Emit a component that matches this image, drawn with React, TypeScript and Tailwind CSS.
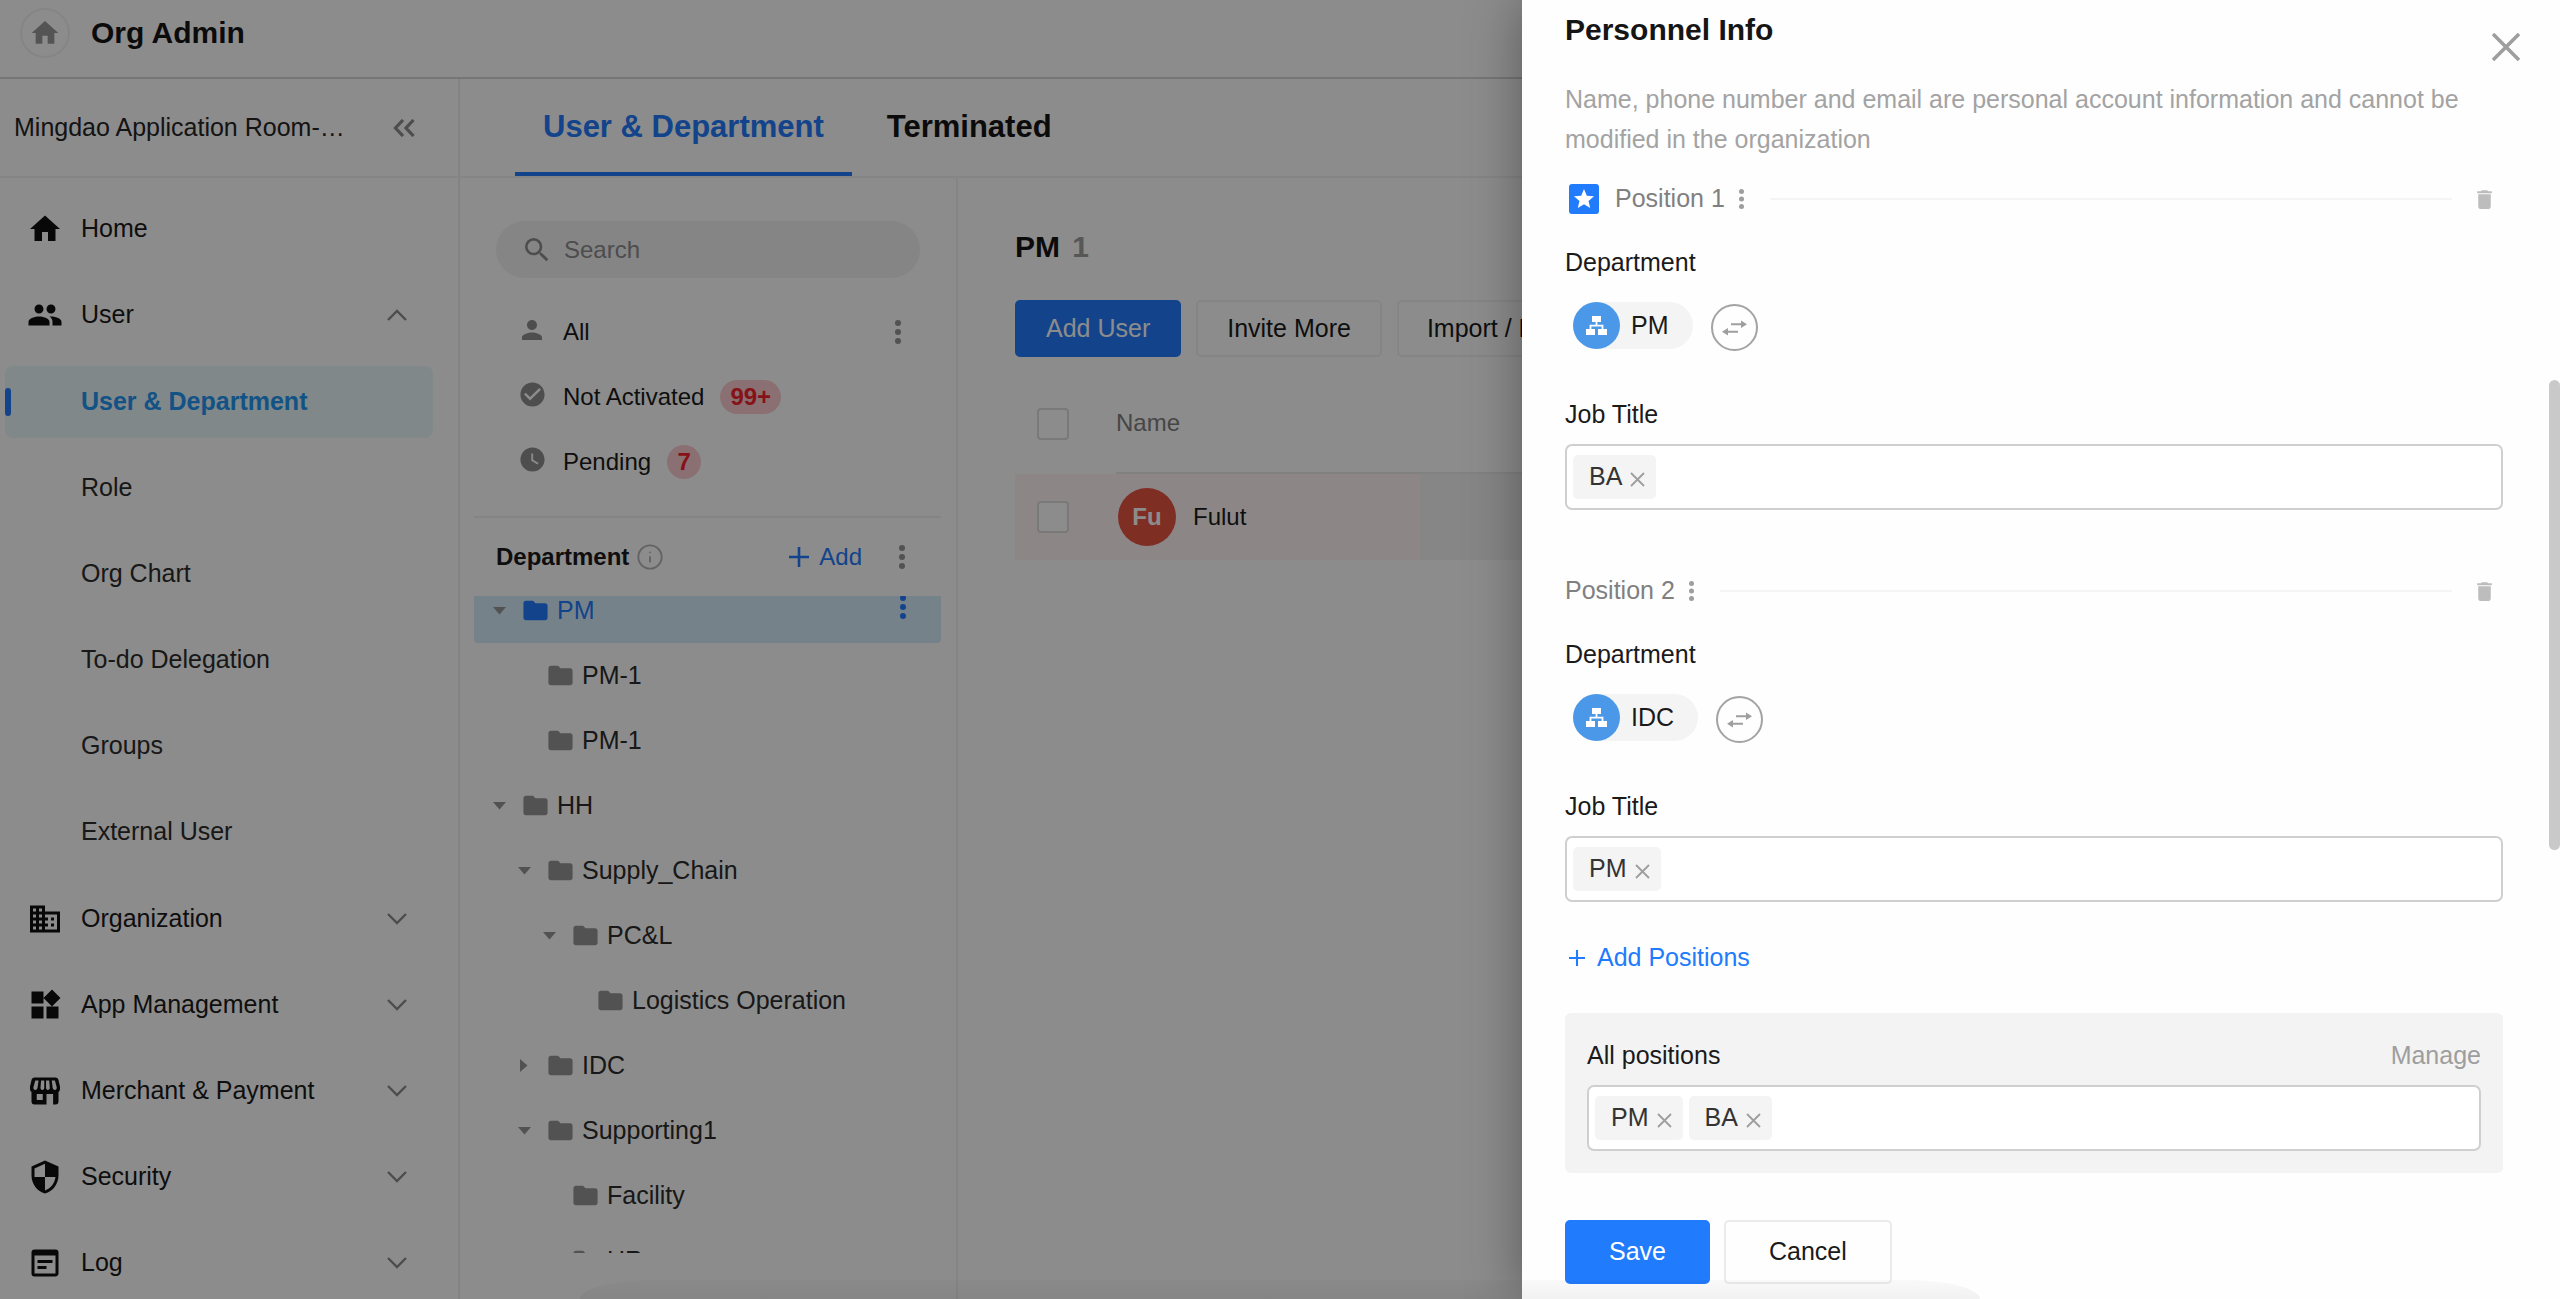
import { clsx } from 'clsx'
import { Info } from 'lucide-react'
import type { ReactNode } from 'react'
import {
  MdCheckCircle,
  MdDelete,
  MdDomain,
  MdFolder,
  MdHome,
  MdPeople,
  MdPerson,
  MdSearch,
  MdSecurity,
  MdStar,
  MdWatchLater,
  MdWidgets,
  MdWysiwyg,
} from 'react-icons/md'

const userPages = [
  'User & Department',
  'Role',
  'Org Chart',
  'To-do Delegation',
  'Groups',
  'External User',
]

const sections = [
  { label: 'Organization', icon: <MdDomain size={36} /> },
  { label: 'App Management', icon: <MdWidgets size={36} /> },
  { label: 'Merchant & Payment', icon: <StoreIcon /> },
  { label: 'Security', icon: <MdSecurity size={36} /> },
  { label: 'Log', icon: <MdWysiwyg size={36} /> },
]

type TreeNode = {
  id: number
  name: string
  level: number
  state?: 'open' | 'closed'
  selected?: boolean
}

const departments: TreeNode[] = [
  { id: 1, name: 'PM', level: 0, state: 'open', selected: true },
  { id: 2, name: 'PM-1', level: 1 },
  { id: 3, name: 'PM-1', level: 1 },
  { id: 4, name: 'HH', level: 0, state: 'open' },
  { id: 5, name: 'Supply_Chain', level: 1, state: 'open' },
  { id: 6, name: 'PC&L', level: 2, state: 'open' },
  { id: 7, name: 'Logistics Operation', level: 3 },
  { id: 8, name: 'IDC', level: 1, state: 'closed' },
  { id: 9, name: 'Supporting1', level: 1, state: 'open' },
  { id: 10, name: 'Facility', level: 2 },
  { id: 11, name: 'HR', level: 2 },
]

function StoreIcon() {
  return (
    <svg width="36" height="36" viewBox="0 0 24 24" fill="none">
      <path
        d="M5 3h14a2 2 0 0 1 1.900 1.400L22 9v1.500c0 1-.4 1.700-1 2.200V19a2 2 0 0 1-2 2h-1.600v-7H13v7H5a2 2 0 0 1-2-2v-6.300c-.6-.5-1-1.200-1-2.200V9l1.100-4.600A2 2 0 0 1 5 3z"
        fill="currentColor"
      />
      <path
        d="M5.500 5 4.300 9.500c-.2 1 .4 1.800 1.200 1.800s1.400-.6 1.500-1.400L7.700 5zM9.400 5 9 9.800c0 .9.600 1.500 1.300 1.500s1.200-.6 1.200-1.400V5zM12.700 5v4.900c0 .8.500 1.400 1.200 1.400s1.300-.6 1.300-1.500L14.800 5zM16.500 5l.6 4.900c.1.800.7 1.400 1.500 1.400s1.400-.8 1.200-1.800L18.600 5zM6.500 14h4v4h-4z"
        fill="#fff"
      />
    </svg>
  )
}

function Chevron({ up }: { up?: boolean }) {
  return (
    <svg width="20" height="12" viewBox="0 0 20 12" fill="none">
      <path
        d={up ? 'M1 11 10 2l9 9' : 'M1 1l9 9 9-9'}
        stroke="#8c8c8c"
        strokeWidth="2.4"
      />
    </svg>
  )
}

function Kebab({ small }: { small?: boolean }) {
  return (
    <svg
      width={small ? 5 : 6}
      height={small ? 20 : 24}
      viewBox="0 0 6 24"
      fill="currentColor"
    >
      <circle cx="3" cy="3" r="3" />
      <circle cx="3" cy="12" r="3" />
      <circle cx="3" cy="21" r="3" />
    </svg>
  )
}

function Caret({ state }: { state?: 'open' | 'closed' }) {
  return (
    <span className="flex w-6 shrink-0 justify-center text-[#959595]">
      {state && (
        <svg width="13" height="13" viewBox="0 0 13 13" fill="currentColor">
          <path d={state === 'open' ? 'M0 3h13l-6.500 7.500z' : 'M2 0l7.500 6.500L2 13z'} />
        </svg>
      )}
    </span>
  )
}

function Cross({ size, width }: { size: number; width: number }) {
  return (
    <svg width={size} height={size} viewBox={`0 0 ${size} ${size}`}>
      <path
        d={`M1 1 ${size - 1} ${size - 1}M${size - 1} 1 1 ${size - 1}`}
        stroke="currentColor"
        strokeWidth={width}
      />
    </svg>
  )
}

function Plus({ size, width }: { size: number; width: number }) {
  return (
    <svg width={size} height={size} viewBox="0 0 20 20">
      <path d="M10 0v20M0 10h20" stroke="currentColor" strokeWidth={width} />
    </svg>
  )
}

type NavItemProps = {
  label: string
  icon?: ReactNode
  active?: boolean
  toggle?: 'up' | 'down'
}

function NavItem({ label, icon, active, toggle }: NavItemProps) {
  return (
    <li className="py-[7px] pl-[5px] pr-[25px]">
      <a
        href="#"
        className={clsx(
          'relative flex h-[72px] items-center gap-[18px] rounded-lg pl-[22px] pr-[26px]',
          active && 'bg-[#ecf7fc] font-bold text-[#2196f3]',
          !active && (icon ? 'text-[#1a1a1a]' : 'text-[#2c2c2c]'),
        )}
      >
        {active && (
          <span className="absolute left-0 h-7 w-[6px] rounded-sm bg-[#217bfd]" />
        )}
        <span className="w-9 shrink-0 text-[#101010]">{icon}</span>
        <span className="flex-1 whitespace-nowrap">{label}</span>
        {toggle && <Chevron up={toggle === 'up'} />}
      </a>
    </li>
  )
}

function Sidebar() {
  return (
    <aside className="w-[460px] shrink-0 overflow-hidden border-r-2 border-[#f0eeee]">
      <div className="flex h-[99px] items-center justify-between border-b-2 border-[#f2f2f2] pl-[14px] pr-[43px]">
        <span className="whitespace-nowrap text-[#262626]">
          Mingdao Application Room-…
        </span>
        <button type="button" aria-label="Collapse menu" className="text-[#8c8c8c]">
          <svg width="22" height="18" viewBox="0 0 22 18" fill="none">
            <path
              d="M10 1 2.500 9l7.500 8M20.500 1 13 9l7.500 8"
              stroke="currentColor"
              strokeWidth="3.2"
            />
          </svg>
        </button>
      </div>
      <nav className="pt-2">
        <ul>
          <NavItem label="Home" icon={<MdHome size={36} />} />
          <NavItem label="User" icon={<MdPeople size={36} />} toggle="up" />
        </ul>
        <ul className="py-px">
          {userPages.map((page, index) => (
            <NavItem key={page} label={page} active={index === 0} />
          ))}
        </ul>
        <ul>
          {sections.map(({ label, icon }) => (
            <NavItem key={label} label={label} icon={icon} toggle="down" />
          ))}
        </ul>
      </nav>
    </aside>
  )
}

type FilterProps = {
  label: string
  icon: ReactNode
  count?: string
  menu?: boolean
}

function Filter({ label, icon, count, menu }: FilterProps) {
  return (
    <li className="flex h-[65px] items-center px-[55px] text-2xl text-[#1a1a1a]">
      <span className="mb-1 flex w-[34px] justify-center text-[#8f8f8f]">{icon}</span>
      <span className="ml-[14px]">{label}</span>
      {count && (
        <span className="ml-4 flex h-[34px] min-w-[34px] items-center justify-center rounded-full bg-[#fccdd1] px-[10px] font-bold text-[#f5222d]">
          {count}
        </span>
      )}
      {menu && (
        <button type="button" aria-label="More" className="ml-auto text-[#959595]">
          <Kebab />
        </button>
      )}
    </li>
  )
}

function TreeRow({ node }: { node: TreeNode }) {
  return (
    <li
      className={clsx(
        'flex h-[65px] items-center rounded-[4px] pr-[35px]',
        node.selected ? 'bg-[#d8edfc] text-[#217bfd]' : 'text-[#2c2c2c]',
      )}
      style={{ paddingLeft: 13 + node.level * 25 }}
    >
      <Caret state={node.state} />
      <MdFolder
        size={29}
        className={clsx('ml-[10px]', !node.selected && 'text-[#959595]')}
      />
      <span className="ml-[7px] whitespace-nowrap">{node.name}</span>
      {node.selected && (
        <button type="button" aria-label="More" className="mb-2 ml-auto">
          <Kebab />
        </button>
      )}
    </li>
  )
}

function DepartmentPanel() {
  return (
    <section className="flex w-[498px] shrink-0 flex-col overflow-hidden border-r-2 border-[#f2f2f2] pb-[46px]">
      <label className="mx-9 mt-[43px] flex h-[57px] shrink-0 items-center gap-[11px] rounded-full bg-[#f3f3f3] pl-[25px] text-[#8c8c8c]">
        <MdSearch size={32} />
        <input
          type="text"
          aria-label="Search"
          placeholder="Search"
          className="min-w-0 flex-1 bg-transparent text-2xl outline-none placeholder:text-[#8c8c8c]"
        />
      </label>
      <ul className="mt-[21px]">
        <Filter label="All" icon={<MdPerson size={30} />} menu />
        <Filter label="Not Activated" icon={<MdCheckCircle size={29} />} count="99+" />
        <Filter label="Pending" icon={<MdWatchLater size={29} />} count="7" />
      </ul>
      <div className="ml-[14px] mr-[15px] mt-[22px] border-t-2 border-[#f0f0f0]" />
      <div className="flex h-[78px] shrink-0 items-center pl-9 pr-[51px] text-2xl">
        <h2 className="font-bold text-[#1a1a1a]">Department</h2>
        <Info size={28} strokeWidth={1.6} className="ml-[7px] text-[#b5b5b5]" />
        <button
          type="button"
          className="ml-auto flex items-center gap-[10px] text-[#217bfd]"
        >
          <Plus size={20} width={2.6} />
          Add
        </button>
        <button type="button" aria-label="More" className="ml-[37px] text-[#959595]">
          <Kebab />
        </button>
      </div>
      <div className="ml-[14px] mr-[15px] min-h-0 flex-1 overflow-hidden">
        {/* list is scrolled a little past the first row */}
        <ul className="-mt-[18px]">
          {departments.map((node) => (
            <TreeRow key={node.id} node={node} />
          ))}
        </ul>
      </div>
    </section>
  )
}

function Checkbox({ label }: { label: string }) {
  return (
    <input
      type="checkbox"
      aria-label={label}
      className="block size-8 appearance-none rounded-[4px] border-2 border-[#dcdcdc] bg-white"
    />
  )
}

function UserList() {
  return (
    <section className="min-w-0 flex-1 overflow-hidden pl-[57px] pt-[49px]">
      <h1 className="text-3xl leading-10 font-bold text-[#151515]">
        PM <span className="ml-1 text-[#9e9e9e]">1</span>
      </h1>
      <div className="mt-[33px] flex gap-[15px]">
        <button
          type="button"
          className="h-[57px] rounded-[5px] bg-[#217bfd] px-[31px] text-white"
        >
          Add User
        </button>
        <button
          type="button"
          className="h-[57px] rounded-[5px] border-2 border-[#f2f2f2] px-[29px] text-[#1a1a1a]"
        >
          Invite More
        </button>
        <button
          type="button"
          className="h-[57px] rounded-[5px] border-2 border-[#f2f2f2] px-7 text-[#1a1a1a]"
        >
          Import / Export
        </button>
      </div>
      <table className="mt-4 w-full table-fixed border-separate border-spacing-0 text-left text-2xl">
        <thead>
          <tr className="h-[101px]">
            <th className="w-[101px] pl-[22px]">
              <Checkbox label="Select all" />
            </th>
            <th className="w-[304px] border-b-2 border-[#ececec] font-normal text-[#808080]">
              Name
            </th>
            <th className="border-b-2 border-[#ececec]" />
          </tr>
        </thead>
        <tbody>
          <tr className="h-[86px]">
            <td className="bg-[#fff6f4] pl-[22px]">
              <Checkbox label="Select Fulut" />
            </td>
            <td className="bg-[#fff6f4]">
              <div className="flex items-center gap-[17px] pl-[2px] text-[#1a1a1a]">
                <span className="flex size-[58px] items-center justify-center rounded-full bg-[#e85441] font-bold text-white">
                  Fu
                </span>
                Fulut
              </div>
            </td>
            <td className="bg-[#f5f5f5]" />
          </tr>
        </tbody>
      </table>
    </section>
  )
}

function Tag({ name }: { name: string }) {
  return (
    <span className="flex h-11 items-center gap-2 rounded-[5px] bg-[#f4f4f4] pl-4 pr-[11px] text-[#333]">
      {name}
      <button type="button" aria-label={`Remove ${name}`} className="mt-1 text-[#9e9e9e]">
        <Cross size={15} width={1.8} />
      </button>
    </span>
  )
}

function TagInput({ id, tags }: { id: string; tags: string[] }) {
  return (
    <div className="mt-[10px] flex h-[66px] items-center gap-[6px] rounded-[7px] border-2 border-[#cfcfcf] bg-white px-[6px]">
      {tags.map((tag) => (
        <Tag key={tag} name={tag} />
      ))}
      <input id={id} type="text" className="min-w-0 flex-1 bg-transparent outline-none" />
    </div>
  )
}

type PositionProps = {
  index: number
  department: string
  title: string
  main?: boolean
}

function Position({ index, department, title, main }: PositionProps) {
  return (
    <section>
      <div className="flex h-10 items-center">
        {main && (
          <span className="ml-1 mr-4 flex size-[30px] items-center justify-center rounded-[3px] bg-[#217bfd] text-white">
            <MdStar size={24} />
          </span>
        )}
        <h3 className="text-[#808080]">Position {index}</h3>
        <button type="button" aria-label="More" className="ml-[14px] text-[#9e9e9e]">
          <Kebab small />
        </button>
        <div className="ml-[26px] mr-5 h-0.5 flex-1 bg-[#f2f4f6]" />
        <button
          type="button"
          aria-label={`Delete position ${index}`}
          className="mr-[6px] text-[#bdbdbd]"
        >
          <MdDelete size={25} />
        </button>
      </div>
      <h4 className="mt-[23px] leading-10 text-[#1a1a1a]">Department</h4>
      <div className="mt-5 flex h-[49px] items-start gap-[18px] pl-2">
        <span className="flex h-[47px] items-center gap-[11px] rounded-full bg-[#f4f4f4] pr-6 text-[#1a1a1a]">
          <span className="flex size-[47px] items-center justify-center rounded-full bg-[#4c98e8]">
            <svg width="21" height="19" viewBox="0 0 21 19" fill="#fff">
              <path d="M6 0h9v6H6zM0 13h9v6H0zM12 13h9v6h-9z" />
              <path
                d="M10.500 5v4.700M4.500 14V9.700h12V14"
                fill="none"
                stroke="#fff"
                strokeWidth="1.8"
              />
            </svg>
          </span>
          {department}
        </span>
        <button
          type="button"
          aria-label="Change department"
          className="flex size-[47px] items-center justify-center self-end rounded-full border-2 border-[#a3a3a3] text-[#9e9e9e]"
        >
          <svg width="25" height="16" viewBox="0 0 25 16" fill="currentColor">
            <path d="M9 3.200h10V.5l6 3.700-6 3.700V5.200H9zM16 10.800H6V8.100l-6 3.700 6 3.700v-2.700h10z" />
          </svg>
        </button>
      </div>
      <label htmlFor={`job-title-${index}`} className="mt-[43px] block leading-10 text-[#1a1a1a]">
        Job Title
      </label>
      <TagInput id={`job-title-${index}`} tags={[title]} />
    </section>
  )
}

function PersonnelDrawer() {
  return (
    <div
      role="dialog"
      aria-labelledby="drawer-title"
      className="absolute inset-y-0 right-0 w-[1038px] overflow-hidden bg-[#fefefe] pl-[43px] pr-[57px] pt-[10px] shadow-[0_0_50px_rgba(0,0,0,0.36)]"
    >
      <h2 id="drawer-title" className="text-3xl leading-10 font-bold text-[#151515]">
        Personnel Info
      </h2>
      <button
        type="button"
        aria-label="Close"
        className="absolute right-10 top-[33px] text-[#9e9e9e]"
      >
        <Cross size={28} width={3.6} />
      </button>
      <p className="mt-[29px] leading-10 text-[#a3a3a3]">
        Name, phone number and email are personal account information and cannot be
        modified in the organization
      </p>
      <div className="mt-5 flex flex-col gap-[61px]">
        <Position index={1} department="PM" title="BA" main />
        <Position index={2} department="IDC" title="PM" />
      </div>
      <button
        type="button"
        className="ml-1 mt-9 flex h-10 items-center gap-3 text-[#217bfd]"
      >
        <Plus size={16} width={2.6} />
        Add Positions
      </button>
      <div className="mt-[35px] rounded-[6px] bg-[#f3f3f3] px-[22px] py-[22px]">
        <div className="flex items-center justify-between leading-10">
          <label htmlFor="all-positions" className="text-[#1a1a1a]">
            All positions
          </label>
          <a href="#" className="text-[#9e9e9e]">
            Manage
          </a>
        </div>
        <TagInput id="all-positions" tags={['PM', 'BA']} />
      </div>
      <div className="mt-[47px] flex gap-[14px]">
        <button type="button" className="h-16 rounded-[5px] bg-[#217bfd] px-[44px] text-white">
          Save
        </button>
        <button
          type="button"
          className="h-16 rounded-[5px] border-2 border-[#ebebeb] px-[43px] text-[#1a1a1a]"
        >
          Cancel
        </button>
      </div>
      {/* scroll thumb */}
      <div className="absolute right-0 top-[380px] h-[470px] w-[11px] rounded-full bg-[#c9c9c9]" />
    </div>
  )
}

export default function App() {
  return (
    <div className="relative flex h-screen flex-col overflow-hidden bg-white font-['Liberation_Sans',Arial,sans-serif] text-[25px]">
      <header className="flex h-[79px] shrink-0 items-center border-b-2 border-[#d8d8d8] pb-3 pl-5">
        <a
          href="#"
          aria-label="Home"
          className="flex size-[50px] items-center justify-center rounded-full border-2 border-[#f2f2f2] text-[#999]"
        >
          <MdHome size={32} />
        </a>
        <h1 className="ml-[21px] text-3xl font-bold text-[#151515]">Org Admin</h1>
      </header>
      <div className="flex min-h-0 flex-1">
        <Sidebar />
        <main className="flex min-w-0 flex-1 flex-col">
          <div className="flex h-[99px] shrink-0 gap-[7px] border-b-2 border-[#f2f2f2] pl-[55px] text-[31px] font-bold">
            <a
              href="#"
              className="flex items-center border-b-4 border-[#217bfd] px-7 pt-1 text-[#217bfd]"
            >
              User & Department
            </a>
            <a
              href="#"
              className="flex items-center border-b-4 border-transparent px-7 pt-1 text-[#151515]"
            >
              Terminated
            </a>
          </div>
          <div className="flex min-h-0 flex-1">
            <DepartmentPanel />
            <UserList />
          </div>
        </main>
      </div>
      <div className="absolute inset-0 bg-black/45" />
      <PersonnelDrawer />
      {/* soft shade along the bottom edge */}
      <div className="pointer-events-none absolute inset-x-[580px] bottom-0 h-[19px] rounded-[75px_75px_0_0/19px_19px_0_0] bg-linear-to-b from-black/2 to-black/5" />
    </div>
  )
}
